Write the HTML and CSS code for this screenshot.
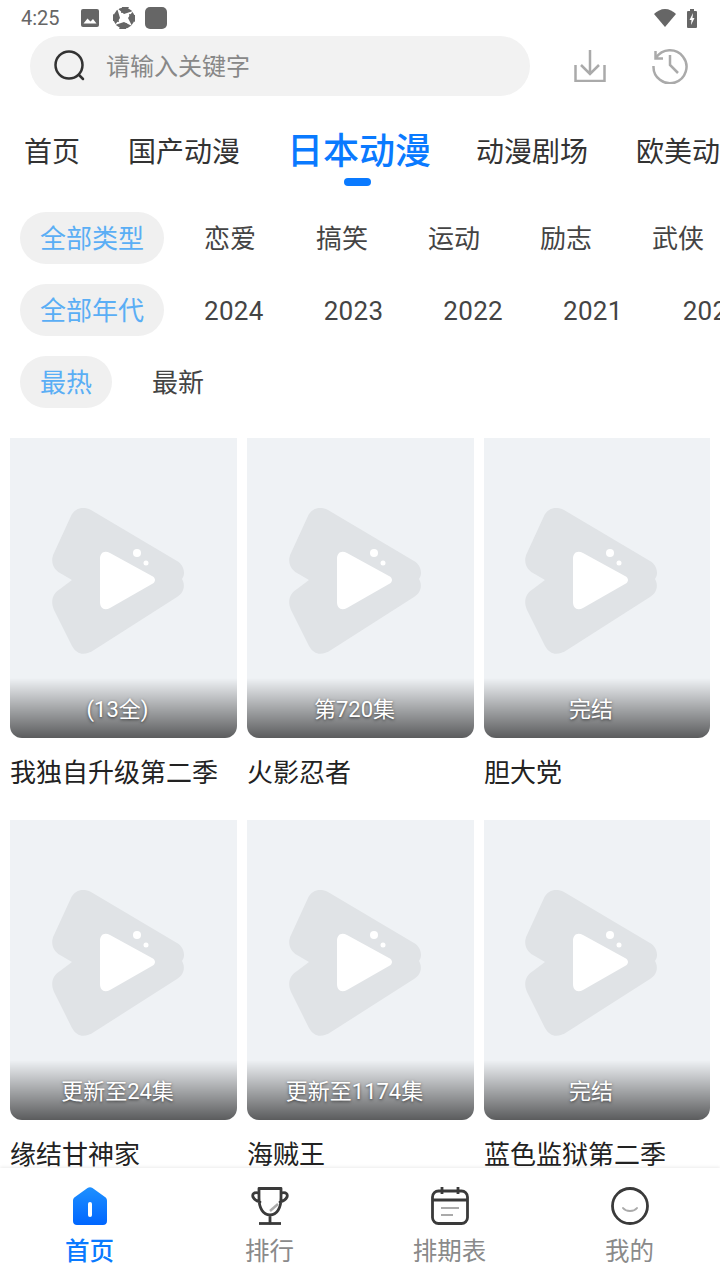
FILE: index.html
```html
<!DOCTYPE html>
<html lang="zh-CN">
<head>
    <meta charset="UTF-8">
    <meta name="viewport" content="width=device-width, initial-scale=1.0">
    <title>日本动漫</title>
    <link rel="stylesheet" href="styles.css">
</head>
<body>
    <svg class="defs" width="0" height="0">
        <symbol id="placeholder" viewBox="0 0 140 155">
            <path fill="#e0e3e6" d="M21 11C25 3 33 1 41 5L127 56C134 60 136 69 132 74C135 79 135 87 127 92L44 145C35 151 27 150 22 141L4 105C0 96 3 88 10 84L22 75L10 68C3 64 0 56 4 48Z"/>
            <path fill="#fff" d="M50 54C50 48 54 45 60 48L102 71C106 73 106 77 102 79L60 103C54 106 50 103 50 97Z"/>
            <circle fill="#fff" cx="87" cy="48" r="4"/>
            <circle fill="#fff" cx="96" cy="58" r="2.5"/>
        </symbol>
    </svg>

    <div class="page">
        <!-- Status bar -->
        <div class="status">
            <span class="time">4:25</span>
            <svg class="st-image" width="18" height="18" viewBox="0 0 18 18"><path fill="#666" d="M2 0H16A2 2 0 0 1 18 2V16A2 2 0 0 1 16 18H2A2 2 0 0 1 0 16V2A2 2 0 0 1 2 0Z"/><path fill="#fff" d="M2.500 14.500L6.500 9.500L9.500 12.500L12 10L15.500 14.500Z"/></svg>
            <svg class="st-globe" width="22" height="22" viewBox="0 0 22 22"><circle cx="11" cy="11" r="10.500" fill="#666"/><path fill="#fff" d="M4 1L11 7L20 4L15 11L19 19L11 15L2 18L7 11Z"/><path fill="#666" d="M9 0H16L13 5L8 6ZM22 8V15L17 12L16 7ZM13 22H6L9 17L14 16ZM0 14V7L5 10L6 15Z"/></svg>
            <span class="st-square"></span>
            <span class="status-space"></span>
            <svg width="22" height="18" viewBox="0 0 22 18"><path fill="#666" d="M0 5C3 2 7 0 11 0S19 2 22 5L11 18Z"/></svg>
            <svg class="st-battery" width="10" height="19" viewBox="0 0 10 19"><path fill="#666" d="M3 0H7V2H9A1 1 0 0 1 10 3V18A1 1 0 0 1 9 19H1A1 1 0 0 1 0 18V3A1 1 0 0 1 1 2H3Z"/><path fill="#fff" d="M6 4L2.500 11H4.500L4 16L7.500 9H5.500Z"/></svg>
        </div>

        <!-- Search -->
        <div class="search-row">
            <div class="search">
                <svg width="34" height="34" viewBox="0 0 34 34"><circle cx="16" cy="16" r="13.500" fill="none" stroke="#333" stroke-width="2.500"/><path d="M26 26L30 30" stroke="#333" stroke-width="2.500" stroke-linecap="round"/></svg>
                <span>请输入关键字</span>
            </div>
            <svg class="download" width="32" height="32" viewBox="0 0 32 32"><path fill="none" stroke="#aaa" stroke-width="2.500" d="M1.500 15V31H30.500V15M16 0V24M7 15L16 24L25 15"/></svg>
            <svg class="history" width="36" height="36" viewBox="0 0 36 36"><path fill="none" stroke="#aaa" stroke-width="2.500" d="M4 10A16.500 16.500 0 1 1 1.500 18M3.500 3V10.500H11M18 7V17L26 25"/></svg>
        </div>

        <!-- Tabs -->
        <div class="tabs">
            <span class="tab">首页</span>
            <span class="tab">国产动漫</span>
            <span class="tab active">日本动漫</span>
            <span class="tab">动漫剧场</span>
            <span class="tab">欧美动漫</span>
        </div>

        <!-- Filters -->
        <div class="chips">
            <span class="chip on">全部类型</span>
            <span class="chip">恋爱</span>
            <span class="chip">搞笑</span>
            <span class="chip">运动</span>
            <span class="chip">励志</span>
            <span class="chip">武侠</span>
            <span class="chip">热血</span>
        </div>
        <div class="chips years">
            <span class="chip on">全部年代</span>
            <span class="chip">2024</span>
            <span class="chip">2023</span>
            <span class="chip">2022</span>
            <span class="chip">2021</span>
            <span class="chip">2020</span>
        </div>
        <div class="chips">
            <span class="chip on">最热</span>
            <span class="chip">最新</span>
        </div>

        <!-- Cards -->
        <div class="grid">
            <div class="card">
                <div class="cover"><svg class="logo"><use href="#placeholder"/></svg><div class="badge">(13全)</div></div>
                <div class="title">我独自升级第二季</div>
            </div>
            <div class="card">
                <div class="cover"><svg class="logo"><use href="#placeholder"/></svg><div class="badge">第720集</div></div>
                <div class="title">火影忍者</div>
            </div>
            <div class="card">
                <div class="cover"><svg class="logo"><use href="#placeholder"/></svg><div class="badge">完结</div></div>
                <div class="title">胆大党</div>
            </div>
            <div class="card">
                <div class="cover"><svg class="logo"><use href="#placeholder"/></svg><div class="badge">更新至24集</div></div>
                <div class="title">缘结甘神家</div>
            </div>
            <div class="card">
                <div class="cover"><svg class="logo"><use href="#placeholder"/></svg><div class="badge">更新至1174集</div></div>
                <div class="title">海贼王</div>
            </div>
            <div class="card">
                <div class="cover"><svg class="logo"><use href="#placeholder"/></svg><div class="badge">完结</div></div>
                <div class="title">蓝色监狱第二季</div>
            </div>
        </div>

        <!-- Bottom nav -->
        <div class="nav">
            <div class="nav-item current">
                <svg width="38" height="38" viewBox="0 0 38 38">
                    <defs><linearGradient id="homeFill" x1="0" y1="0" x2="0" y2="1"><stop offset="0" stop-color="#1e90ff"/><stop offset="1" stop-color="#0066ff"/></linearGradient></defs>
                    <path fill="url(#homeFill)" d="M16.500 1C18 0 20 0 21.500 1L34 10C35.500 11 36 12 36 14V34C36 36.500 34.500 38 32 38H6C3.500 38 2 36.500 2 34V14C2 12 2.500 11 4 10Z"/>
                    <rect x="17" y="15" width="4" height="15" rx="2" fill="#fff"/>
                </svg>
                <span>首页</span>
            </div>
            <div class="nav-item">
                <svg width="38" height="38" viewBox="0 0 38 38">
                    <path fill="none" stroke="#3a3a3a" stroke-width="2.800" stroke-linecap="round" stroke-linejoin="round" d="M8 1.500H30V11C30 21 26 28 19 28S8 21 8 11ZM7 6C3 5 1 7 2 10C3 12 5 14 9 15M31 6C35 5 37 7 36 10C35 12 33 14 29 15M19 28V36"/>
                    <path stroke="#3a3a3a" stroke-width="2.800" d="M8 36.500H30"/>
                    <path stroke="#aaa" stroke-width="2.500" d="M19 24L27 17"/>
                </svg>
                <span>排行</span>
            </div>
            <div class="nav-item">
                <svg width="38" height="38" viewBox="0 0 38 38">
                    <rect x="1.500" y="4" width="35" height="32.500" rx="6" fill="none" stroke="#3a3a3a" stroke-width="2.800"/>
                    <path stroke="#3a3a3a" stroke-width="2.800" d="M1.500 13H36.500M11 0V7M27 0V7"/>
                    <path stroke="#aaa" stroke-width="2" d="M10 21H28M10 28H22"/>
                </svg>
                <span>排期表</span>
            </div>
            <div class="nav-item">
                <svg width="38" height="38" viewBox="0 0 38 38">
                    <circle cx="19" cy="19" r="17.500" fill="none" stroke="#3a3a3a" stroke-width="2.800"/>
                    <path fill="none" stroke="#aaa" stroke-width="2" stroke-linecap="round" d="M12 21C15 25 23 25 26 21"/>
                </svg>
                <span>我的</span>
            </div>
        </div>
    </div>
</body>
</html>
```

FILE: styles.css
```css
* {
    box-sizing: border-box;
}

body {
    margin: 0;
    background-color: white;
    font-family: Roboto, "Noto Sans CJK SC", sans-serif;
    color: #333;
}

.defs {
    display: block;
    height: 0;
}

.page {
    width: 720px;
    height: 1280px;
    overflow: hidden;
    display: flex;
    flex-direction: column;
    position: relative;
}

/* Status bar */
.status {
    height: 36px;
    flex: none;
    display: flex;
    align-items: center;
    padding: 0 23px 0 21px;
}

.time {
    font-size: 20px;
    color: #666;
    width: 60px;
}

.st-globe {
    margin-left: 14px;
}

.st-square {
    width: 22px;
    height: 22px;
    margin-left: 10px;
    border-radius: 5px;
    background-color: #666;
}

.status-space {
    flex: 1;
}

.st-battery {
    margin-left: 11px;
}

/* Search */
.search-row {
    height: 60px;
    flex: none;
    display: flex;
    align-items: center;
    padding-left: 30px;
}

.search {
    width: 500px;
    height: 60px;
    border-radius: 30px;
    background-color: #f2f2f2;
    display: flex;
    align-items: center;
    padding-left: 23px;
}

.search span {
    font-size: 24px;
    color: #888;
    margin: -3px 0 0 19px;
}

.download {
    margin-left: 44px;
}

.history {
    margin-left: 46px;
}

/* Tabs */
.tabs {
    height: 116px;
    flex: none;
    display: flex;
    gap: 48px;
    padding: 0 0 0 24px;
    white-space: nowrap;
    overflow: hidden;
}

.tab {
    flex: none;
    font-size: 28px;
    line-height: 36px;
    margin-top: 39px;
    color: #333;
    position: relative;
    height: 36px;
}

.tab.active {
    font-size: 36px;
    font-weight: 500;
    color: #0a7aff;
    margin-left: -1px;
    margin-right: -3px;
    margin-top: 38px;
}

.tab.active::after {
    content: "";
    position: absolute;
    left: 57px;
    top: 44px;
    width: 27px;
    height: 8px;
    border-radius: 4px;
    background-color: #0a7aff;
}

/* Filters */
.chips {
    flex: none;
    height: 52px;
    margin-bottom: 20px;
    padding-left: 20px;
    display: flex;
    gap: 20px;
    overflow: hidden;
}

.chip {
    flex: none;
    height: 52px;
    line-height: 54px;
    padding: 0 20px;
    border-radius: 26px;
    font-size: 26px;
    color: #444;
}

.chip.on {
    background-color: #f0f0f0;
    color: #5aaef5;
}

.years .chip {
    letter-spacing: 0.3px;
}

.years .chip.on {
    letter-spacing: 0;
}

/* Cards */
.grid {
    flex: none;
    margin-top: 10px;
    padding: 0 10px;
    display: grid;
    grid-template-columns: 227px 227px 226px;
    gap: 0 10px;
}

.card {
    height: 382px;
    min-width: 0;
}

.cover {
    height: 300px;
    background-color: #eff2f5;
    border-radius: 0 0 12px 12px;
    position: relative;
    overflow: hidden;
    display: flex;
    justify-content: center;
}

.logo {
    width: 140px;
    height: 155px;
    margin: 67px 8px 0 0;
}

.badge {
    position: absolute;
    left: 0;
    right: 0;
    bottom: 0;
    height: 60px;
    line-height: 64px;
    padding-right: 12px;
    text-align: center;
    font-size: 22px;
    color: white;
    text-shadow: 0 1px 3px rgba(0, 0, 0, 0.6);
    background: linear-gradient(rgba(0, 0, 0, 0), rgba(0, 0, 0, 0.62));
}

.title {
    font-size: 26px;
    line-height: 36px;
    margin-top: 17px;
    color: #222;
    white-space: nowrap;
}

/* Bottom nav */
.nav {
    position: absolute;
    left: 0;
    right: 0;
    bottom: 0;
    height: 112px;
    display: grid;
    grid-template-columns: repeat(4, 1fr);
    background-color: white;
    box-shadow: 0 -1px 3px rgba(0, 0, 0, 0.08);
}

.nav-item {
    display: flex;
    flex-direction: column;
    align-items: center;
    padding-top: 19px;
    font-size: 24.5px;
    color: #8a8a8a;
}

.nav-item span {
    line-height: 32px;
    margin: 11px 1px 0 0;
}

.nav-item.current {
    color: #0a7aff;
    font-weight: 500;
}
```
